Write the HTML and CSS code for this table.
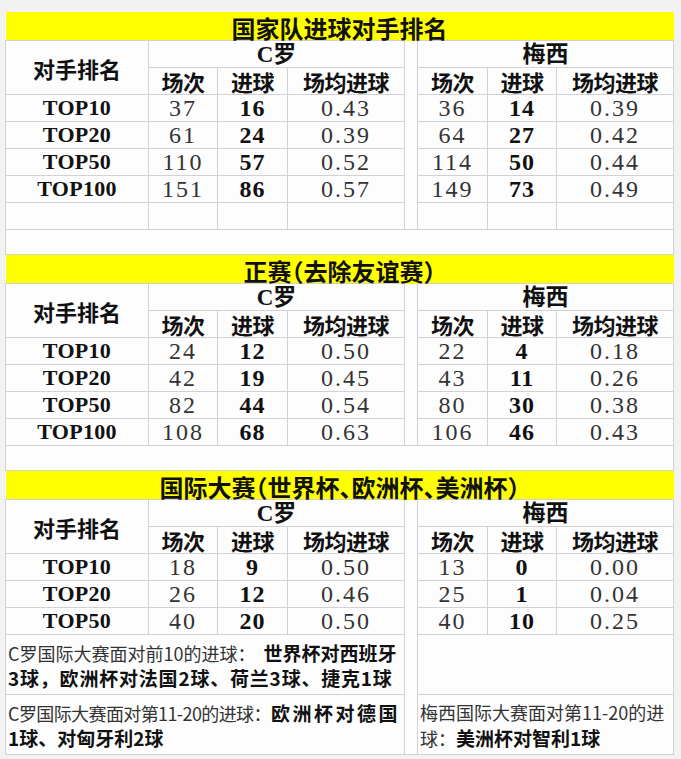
FILE: index.html
```html
<!DOCTYPE html>
<html lang="zh-CN">
<head>
<meta charset="utf-8">
<title>国家队进球对手排名</title>
<link rel="stylesheet" href="styles.css">
</head>
<body>
<table class="sheet">
  <colgroup>
    <col class="c-lbl"><col class="c-a"><col class="c-b"><col class="c-c">
    <col class="c-gap">
    <col class="c-a2"><col class="c-b2"><col class="c-c">
  </colgroup>
  <tbody>
    <tr class="title"><td colspan="8">国家队进球对手排名</td></tr>
    <tr class="hd">
      <td class="lbl" rowspan="2">对手排名</td>
      <td class="hd1" colspan="3">C罗</td>
      <td class="gap" rowspan="7"></td>
      <td class="hd1" colspan="3">梅西</td>
    </tr>
    <tr class="hd">
      <td class="hd2">场次</td><td class="hd2">进球</td><td class="hd2">场均进球</td>
      <td class="hd2">场次</td><td class="hd2">进球</td><td class="hd2">场均进球</td>
    </tr>
    <tr class="row"><td class="top">TOP10</td><td class="n">37</td><td class="b">16</td><td class="n">0.43</td><td class="n">36</td><td class="b">14</td><td class="n">0.39</td></tr>
    <tr class="row"><td class="top">TOP20</td><td class="n">61</td><td class="b">24</td><td class="n">0.39</td><td class="n">64</td><td class="b">27</td><td class="n">0.42</td></tr>
    <tr class="row"><td class="top">TOP50</td><td class="n">110</td><td class="b">57</td><td class="n">0.52</td><td class="n">114</td><td class="b">50</td><td class="n">0.44</td></tr>
    <tr class="row"><td class="top">TOP100</td><td class="n">151</td><td class="b">86</td><td class="n">0.57</td><td class="n">149</td><td class="b">73</td><td class="n">0.49</td></tr>
    <tr class="row"><td></td><td></td><td></td><td></td><td></td><td></td><td></td></tr>
    <tr class="sep"><td colspan="8"></td></tr>

    <tr class="title"><td colspan="8">正赛（去除友谊赛）</td></tr>
    <tr class="hd">
      <td class="lbl" rowspan="2">对手排名</td>
      <td class="hd1" colspan="3">C罗</td>
      <td class="gap" rowspan="6"></td>
      <td class="hd1" colspan="3">梅西</td>
    </tr>
    <tr class="hd">
      <td class="hd2">场次</td><td class="hd2">进球</td><td class="hd2">场均进球</td>
      <td class="hd2">场次</td><td class="hd2">进球</td><td class="hd2">场均进球</td>
    </tr>
    <tr class="row"><td class="top">TOP10</td><td class="n">24</td><td class="b">12</td><td class="n">0.50</td><td class="n">22</td><td class="b">4</td><td class="n">0.18</td></tr>
    <tr class="row"><td class="top">TOP20</td><td class="n">42</td><td class="b">19</td><td class="n">0.45</td><td class="n">43</td><td class="b">11</td><td class="n">0.26</td></tr>
    <tr class="row"><td class="top">TOP50</td><td class="n">82</td><td class="b">44</td><td class="n">0.54</td><td class="n">80</td><td class="b">30</td><td class="n">0.38</td></tr>
    <tr class="row"><td class="top">TOP100</td><td class="n">108</td><td class="b">68</td><td class="n">0.63</td><td class="n">106</td><td class="b">46</td><td class="n">0.43</td></tr>
    <tr class="sep"><td colspan="8"></td></tr>

    <tr class="title"><td colspan="8">国际大赛（世界杯、欧洲杯、美洲杯）</td></tr>
    <tr class="hd">
      <td class="lbl" rowspan="2">对手排名</td>
      <td class="hd1" colspan="3">C罗</td>
      <td class="gap" rowspan="7"></td>
      <td class="hd1" colspan="3">梅西</td>
    </tr>
    <tr class="hd">
      <td class="hd2">场次</td><td class="hd2">进球</td><td class="hd2">场均进球</td>
      <td class="hd2">场次</td><td class="hd2">进球</td><td class="hd2">场均进球</td>
    </tr>
    <tr class="row"><td class="top">TOP10</td><td class="n">18</td><td class="b">9</td><td class="n">0.50</td><td class="n">13</td><td class="b">0</td><td class="n">0.00</td></tr>
    <tr class="row"><td class="top">TOP20</td><td class="n">26</td><td class="b">12</td><td class="n">0.46</td><td class="n">25</td><td class="b">1</td><td class="n">0.04</td></tr>
    <tr class="row"><td class="top">TOP50</td><td class="n">40</td><td class="b">20</td><td class="n">0.50</td><td class="n">40</td><td class="b">10</td><td class="n">0.25</td></tr>
    <tr class="note">
      <td class="txt" colspan="4"><div class="ln"><span class="reg">C罗国际大赛面对前10的进球：</span><span class="bold first">世界杯对西班牙</span></div><div class="ln"><span class="bold spread-a">3球，欧洲杯对法国2球、荷兰3球、捷克1球</span></div></td>
      <td class="txt" colspan="3"></td>
    </tr>
    <tr class="note">
      <td class="txt" colspan="4"><div class="ln"><span class="reg tight">C罗国际大赛面对第11-20的进球：</span><span class="bold spread-b">欧洲杯对德国</span></div><div class="ln"><span class="bold">1球、对匈牙利2球</span></div></td>
      <td class="txt" colspan="3"><div class="ln"><span class="reg">梅西国际大赛面对第11-20的进</span></div><div class="ln"><span class="reg">球：</span><span class="bold">美洲杯对智利1球</span></div></td>
    </tr>
  </tbody>
</table>
</body>
</html>
```

FILE: styles.css
```css
html, body {
  margin: 0;
  padding: 0;
  background: #f2f2f2;
}

body {
  font-family: "Liberation Serif", "Noto Sans CJK SC", serif;
  color: #111;
}

.sheet {
  border-collapse: collapse;
  table-layout: fixed;
  width: 668px;
  margin: 12px 0 0 5px;
  background: #fdfdfd;
}

.c-lbl { width: 143px; }
.c-a { width: 69px; }
.c-b { width: 70px; }
.c-c { width: 117px; }
.c-gap { width: 13px; }
.c-a2 { width: 70px; }
.c-b2 { width: 69px; }

.sheet td {
  border: 1px solid #d2d2d2;
  padding: 0;
  text-align: center;
  vertical-align: middle;
  line-height: 1;
  white-space: nowrap;
}

.title { height: 28px; }
.sheet .title td {
  border: none;
  background: #ffff00;
  font-family: "Noto Sans CJK SC", sans-serif;
  font-feature-settings: "halt";
  font-weight: 700;
  font-size: 24px;
  line-height: 24px;
  height: 28px;
  padding: 4px 0 0;
  box-sizing: border-box;
  color: #111;
}

.hd { height: 27px; }
.row { height: 27px; }
.sep { height: 25px; }
.sep td { background: #fdfdfd; }
.note { height: 60px; }

.sheet td.gap { border-top: none; }

.lbl {
  font-family: "Noto Sans CJK SC", sans-serif;
  font-weight: 700;
  font-size: 22px;
}

.hd1 {
  font-weight: 700;
  font-size: 23px;
  padding-top: 1px;
}

.hd2 {
  font-family: "Noto Sans CJK SC", sans-serif;
  font-weight: 700;
  font-size: 22px;
  letter-spacing: -0.5px;
}

.top {
  font-weight: 700;
  font-size: 22px;
  letter-spacing: 0.3px;
  color: #111;
}

.n {
  font-weight: 400;
  font-size: 24px;
  letter-spacing: 2px;
  color: #333;
}

.b {
  font-weight: 700;
  font-size: 24px;
  letter-spacing: 1px;
  color: #111;
}

.sheet td.txt {
  text-align: left;
  padding-left: 2px;
  font-family: "Noto Sans CJK SC", sans-serif;
}

.ln {
  height: 25px;
  line-height: 25px;
  white-space: nowrap;
}

.reg {
  font-size: 18px;
  font-weight: 400;
  color: #333;
}

.reg.tight { letter-spacing: -0.6px; }

.bold {
  font-size: 19px;
  font-weight: 700;
  color: #111;
}

.first { margin-left: 8px; }
.spread-a { letter-spacing: 0.8px; }
.spread-b { letter-spacing: 2.5px; }
```
